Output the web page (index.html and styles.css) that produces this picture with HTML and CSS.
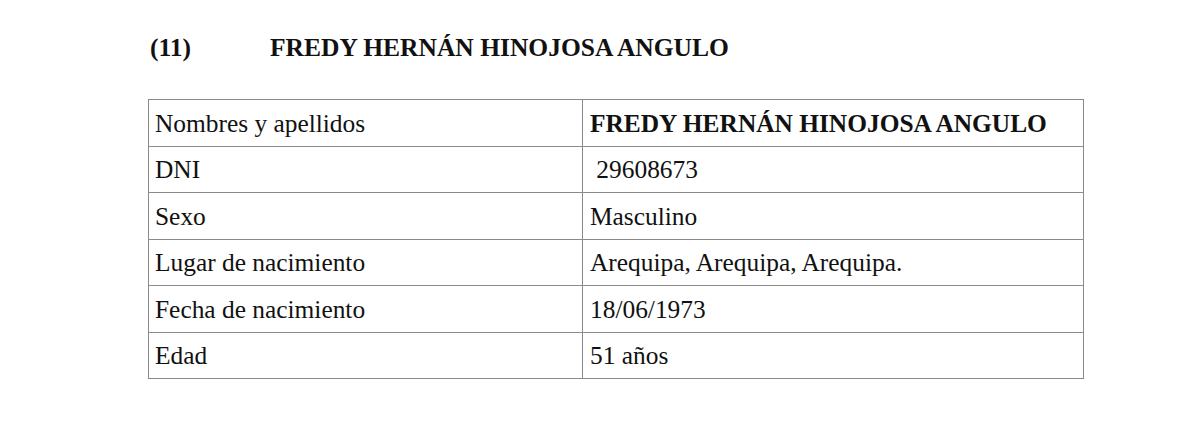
FILE: index.html
```html
<!DOCTYPE html>
<html lang="es">
<head>
<meta charset="utf-8">
<link rel="stylesheet" href="styles.css">
</head>
<body>
<div class="page">
  <h2 class="heading"><span class="num">(11)</span><span class="name">FREDY HERNÁN HINOJOSA ANGULO</span></h2>
  <table class="data">
    <tr><td class="label">Nombres y apellidos</td><td class="value strong">FREDY HERNÁN HINOJOSA ANGULO</td></tr>
    <tr><td class="label">DNI</td><td class="value pre"> 29608673</td></tr>
    <tr><td class="label">Sexo</td><td class="value">Masculino</td></tr>
    <tr><td class="label">Lugar de nacimiento</td><td class="value">Arequipa, Arequipa, Arequipa.</td></tr>
    <tr><td class="label">Fecha de nacimiento</td><td class="value">18/06/1973</td></tr>
    <tr><td class="label">Edad</td><td class="value">51 años</td></tr>
  </table>
</div>
</body>
</html>
```
FILE: styles.css
```css
html, body {
  margin: 0;
  padding: 0;
  background: #ffffff;
}
body {
  font-family: "Liberation Serif", "Times New Roman", serif;
  color: #111111;
}
.page {
  padding: 28px 0 0 148px;
}
.heading {
  margin: 0 0 0 2px;
  font-size: 25.5px;
  font-weight: bold;
  line-height: 40px;
  display: flex;
  color: #111;
}
.heading .num {
  width: 120px;
}
.data {
  margin-top: 31px;
  border-collapse: collapse;
  width: 936px;
  font-size: 25.4px;
}
.data td {
  border: 1px solid #8a8a8a;
  height: 46.5px;
  padding: 0 6px;
  vertical-align: middle;
  line-height: 28px;
  box-sizing: border-box;
}
.data td.label {
  width: 434px;
}
.data td.value {
  padding-left: 7px;
}
.strong {
  font-weight: bold;
}
.pre {
  white-space: pre;
}
```
